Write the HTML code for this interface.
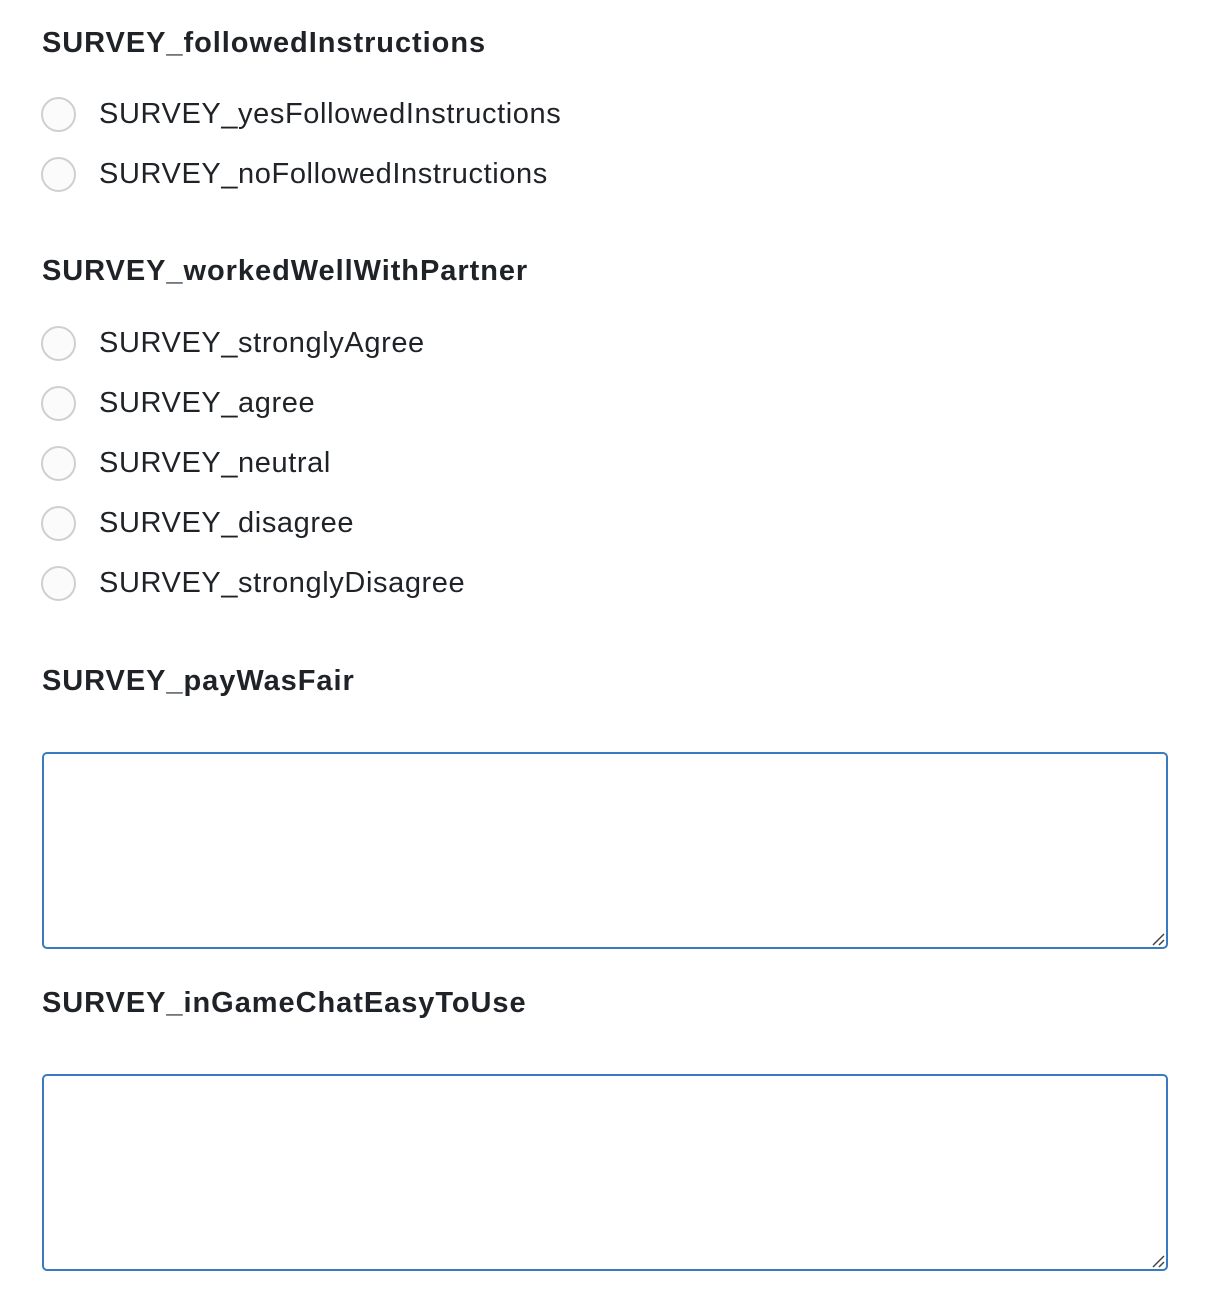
<!DOCTYPE html>
<html><head><style>
body{margin:0;background:#fff;font-family:"Liberation Sans",Arial,sans-serif;color:#1f2328;}
.a{position:absolute;white-space:nowrap;}
.h{font-weight:bold;font-size:29px;letter-spacing:0.95px;left:42px;line-height:34px;}
.l{font-size:29px;letter-spacing:0.6px;left:99px;line-height:34px;}
.r{position:absolute;left:41px;width:31px;height:31px;border:2px solid #cfcfcf;border-radius:50%;background:#fbfbfc;}
.t{position:absolute;left:42px;width:1122px;border:2px solid #3a7bbf;border-radius:5px;background:#fff;}
.g{position:absolute;right:1px;bottom:1px;width:15px;height:15px;}
</style></head><body>
<div class="a h" style="top:26px">SURVEY_followedInstructions</div>
<div class="r" style="top:97px"></div><div class="a l" style="top:97px">SURVEY_yesFollowedInstructions</div>
<div class="r" style="top:157px"></div><div class="a l" style="top:157px">SURVEY_noFollowedInstructions</div>
<div class="a h" style="top:254px">SURVEY_workedWellWithPartner</div>
<div class="r" style="top:326px"></div><div class="a l" style="top:326px">SURVEY_stronglyAgree</div>
<div class="r" style="top:386px"></div><div class="a l" style="top:386px">SURVEY_agree</div>
<div class="r" style="top:446px"></div><div class="a l" style="top:446px">SURVEY_neutral</div>
<div class="r" style="top:506px"></div><div class="a l" style="top:506px">SURVEY_disagree</div>
<div class="r" style="top:566px"></div><div class="a l" style="top:566px">SURVEY_stronglyDisagree</div>
<div class="a h" style="top:664px">SURVEY_payWasFair</div>
<div class="t" style="top:752px;height:193px"><svg class="g" viewBox="0 0 15 15"><path d="M14 3 L3 14 M14 9 L9 14" stroke="#444" stroke-width="1.5"/></svg></div>
<div class="a h" style="top:986px">SURVEY_inGameChatEasyToUse</div>
<div class="t" style="top:1074px;height:193px"><svg class="g" viewBox="0 0 15 15"><path d="M14 3 L3 14 M14 9 L9 14" stroke="#444" stroke-width="1.5"/></svg></div>
</body></html>
